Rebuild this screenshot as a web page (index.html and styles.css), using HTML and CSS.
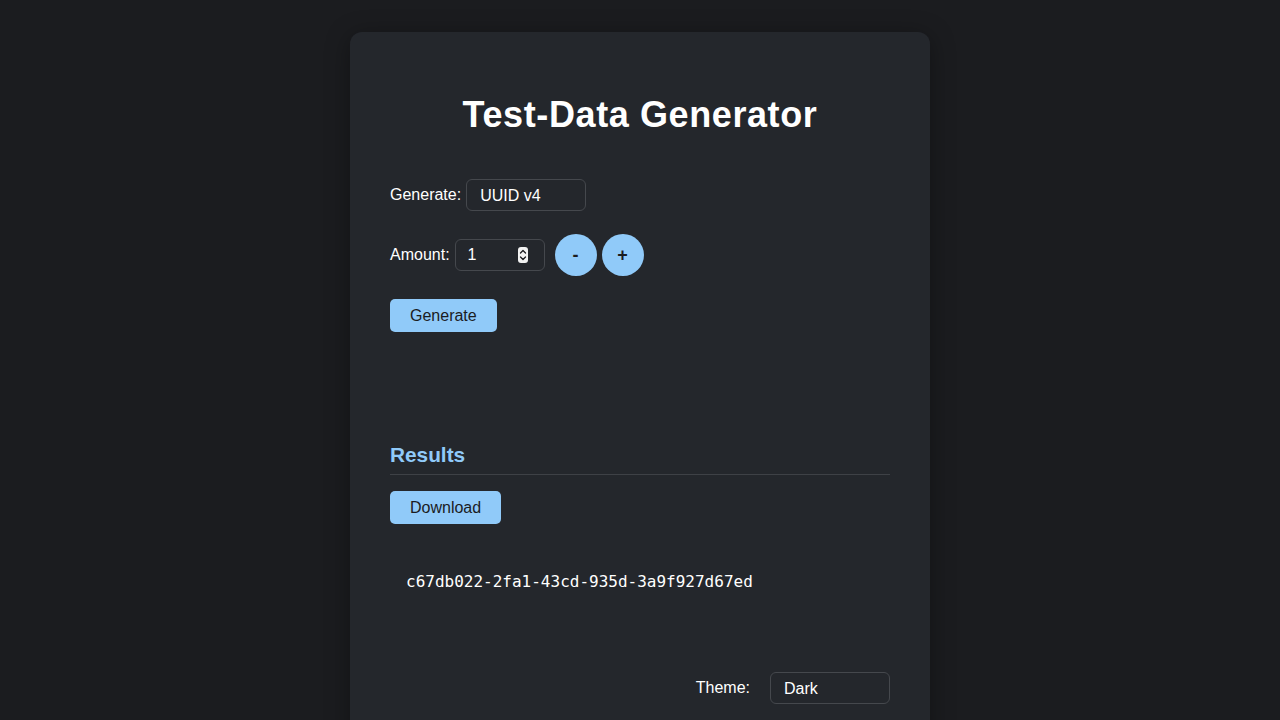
FILE: index.html
```html
<!DOCTYPE html>
<html lang="en">
<head>
<meta charset="utf-8">
<title>Test-Data Generator</title>
<link rel="stylesheet" href="styles.css">
</head>
<body>
<main class="card">
  <h1 class="title">Test-Data Generator</h1>

  <div class="row">
    <label class="label" for="kind">Generate:</label>
    <select class="select" id="kind">
      <option>UUID v4</option>
    </select>
  </div>

  <div class="row row-amount">
    <label class="label" for="amount">Amount:</label>
    <div class="num">
      <input class="num-input" id="amount" type="number" value="1" min="1">
      <span class="spin">
        <svg width="10" height="16" viewBox="0 0 10 16">
          <rect x="0" y="0" width="10" height="16" rx="3" fill="#f2f2f2"/>
          <path d="M2.5 6 L5 3.5 L7.5 6" fill="none" stroke="#1b1c1f" stroke-width="1.3" stroke-linecap="round" stroke-linejoin="round"/>
          <path d="M2.5 10 L5 12.5 L7.5 10" fill="none" stroke="#1b1c1f" stroke-width="1.3" stroke-linecap="round" stroke-linejoin="round"/>
        </svg>
      </span>
    </div>
    <div class="steps">
      <button class="circle" type="button">-</button>
      <button class="circle" type="button">+</button>
    </div>
  </div>

  <div class="row">
    <button class="btn" type="button">Generate</button>
  </div>

  <section class="results">
    <h2 class="results-title">Results</h2>
    <button class="btn" type="button">Download</button>
    <pre class="output">c67db022-2fa1-43cd-935d-3a9f927d67ed</pre>
  </section>

  <div class="theme-row">
    <label class="label" for="theme">Theme:</label>
    <select class="select" id="theme">
      <option>Dark</option>
    </select>
  </div>
</main>
</body>
</html>
```

FILE: styles.css
```css
* { box-sizing: border-box; }

html, body {
  margin: 0;
  background: #1b1c1f;
  color: #ffffff;
  font-family: "Liberation Sans", Arial, Helvetica, sans-serif;
  font-size: 16px;
}

.card {
  width: 580px;
  margin: 32px auto 0;
  padding: 40px 40px 40px;
  background: #24272c;
  border-radius: 12px;
  box-shadow: 0 4px 24px rgba(0, 0, 0, 0.35);
  min-height: 720px;
}

.title {
  margin: 22px 0 43px;
  text-align: center;
  font-size: 36px;
  font-weight: 700;
  letter-spacing: 0.6px;
  color: #ffffff;
}

.row {
  display: flex;
  align-items: center;
  gap: 5px;
  margin-bottom: 23px;
}

.label {
  font-size: 16px;
  color: #ffffff;
}

.select {
  -webkit-appearance: none;
  appearance: none;
  width: 120px;
  height: 32px;
  padding: 0 13px;
  background: transparent;
  color: #ffffff;
  border: 1px solid #45484d;
  border-radius: 6px;
  font-family: inherit;
  font-size: 16px;
}

.num {
  display: flex;
  align-items: center;
  width: 90px;
  height: 32px;
  padding: 0 16px 0 12px;
  border: 1px solid #45484d;
  border-radius: 6px;
}

.num-input {
  flex: 1;
  min-width: 0;
  background: transparent;
  border: 0;
  outline: 0;
  padding: 0;
  color: #ffffff;
  font-family: inherit;
  font-size: 16px;
  -moz-appearance: textfield;
}

.num-input::-webkit-inner-spin-button,
.num-input::-webkit-outer-spin-button {
  -webkit-appearance: none;
  margin: 0;
}

.spin {
  display: flex;
}

.steps {
  display: flex;
  gap: 5px;
  margin-left: 5px;
}

.circle {
  width: 42px;
  height: 42px;
  border-radius: 50%;
  border: 0;
  background: #90caf9;
  color: #1b1c1f;
  font-family: inherit;
  font-size: 18px;
  font-weight: 700;
  padding: 0;
}

.btn {
  height: 33px;
  padding: 0 20px;
  border: 0;
  border-radius: 5px;
  background: #90caf9;
  color: #1b1c1f;
  font-family: inherit;
  font-size: 16px;
}

.results {
  margin-top: 111px;
}

.results-title {
  margin: 0 0 16px;
  padding-bottom: 7px;
  border-bottom: 1px solid #3e4146;
  color: #90caf9;
  font-size: 20.8px;
  font-weight: 700;
}

.output {
  margin: 16px 0 0;
  padding: 32px 16px 31px;
  font-family: "DejaVu Sans Mono", "Liberation Mono", monospace;
  font-size: 16px;
  color: #ffffff;
}

.theme-row {
  display: flex;
  justify-content: flex-end;
  align-items: center;
  gap: 20px;
  margin-top: 50px;
}
```
